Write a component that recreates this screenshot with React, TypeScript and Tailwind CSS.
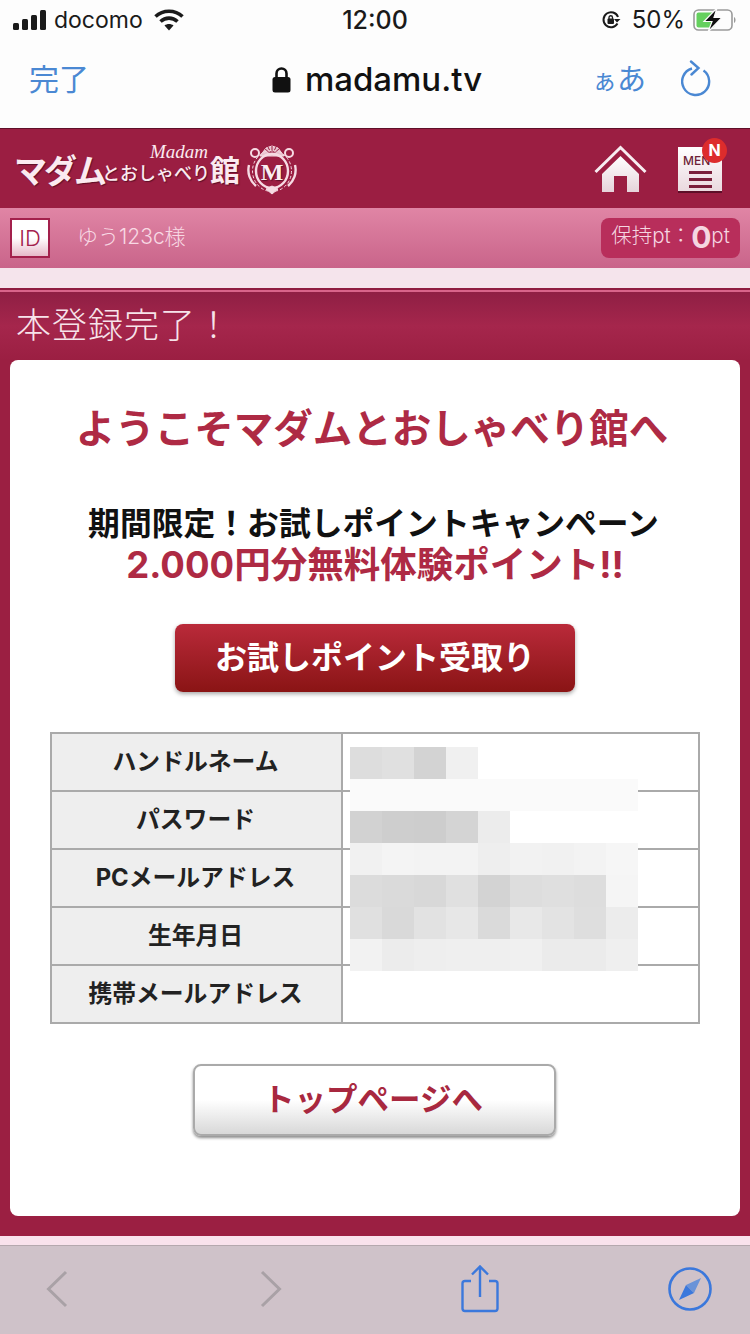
import React from 'react';

const mosaic: string[][] = [
  ['#dddddd', '#e0e0e0', '#d3d3d3', '#f0f0f0'],
  ['#fafafa', '#fafafa', '#fafafa', '#fafafa', '#fafafa', '#fafafa', '#fafafa', '#fafafa', '#fafafa'],
  ['#d2d2d2', '#cecece', '#cdcdcd', '#d4d4d4', '#ececec'],
  ['#f1f1f1', '#f4f4f4', '#f3f3f3', '#f3f3f3', '#eeeeee', '#f2f2f2', '#f1f1f1', '#f3f3f3', '#f6f6f6'],
  ['#dcdcdc', '#dadada', '#d8d8d8', '#e0e0e0', '#d3d3d3', '#dddddd', '#dfdfdf', '#dddddd', '#f5f5f5'],
  ['#e0e0e0', '#d9d9d9', '#e2e2e2', '#e7e7e7', '#dadada', '#e8e8e8', '#e3e3e3', '#dedede', '#ececec'],
  ['#f2f2f2', '#ececec', '#eeeeee', '#efefef', '#efefef', '#f0f0f0', '#ebebeb', '#ebebeb', '#efefef'],
];

const labels = ['ハンドルネーム', 'パスワード', 'PCメールアドレス', '生年月日', '携帯メールアドレス'];

const StatusBar = () => (
  <div className="h-[40px] flex items-center justify-between pl-[13px] pr-[13px] text-[#1a1a1a]">
    <div className="w-[260px] flex items-center gap-[6px]">
      <svg width="35" height="20" viewBox="0 0 35 20" fill="#1a1a1a">
        <rect x="0" y="13" width="6" height="7" rx="1.5" />
        <rect x="9" y="9" width="6" height="11" rx="1.5" />
        <rect x="18" y="5" width="6" height="15" rx="1.5" />
        <rect x="27" y="0" width="6" height="20" rx="1.5" />
      </svg>
      <span className="text-[23px] leading-none">docomo</span>
      <svg className="ml-[5px]" width="30" height="22" viewBox="0 0 30 22" fill="none" stroke="#1a1a1a" strokeWidth="3.6">
        <path d="M1.5 7.5 C9 0.5 21 0.5 28.5 7.5" />
        <path d="M6.5 12.5 C11.5 8 18.5 8 23.5 12.5" />
        <path d="M15 21.5 L10.5 16.5 C13 14.5 17 14.5 19.5 16.5 Z" fill="#1a1a1a" stroke="none" />
      </svg>
    </div>
    <span className="text-[25px] font-medium leading-none">12:00</span>
    <div className="w-[260px] flex items-center justify-end">
      <svg width="20" height="20" viewBox="0 0 20 20" fill="none" stroke="#1a1a1a">
        <path d="M16.5 13.5 A7.5 7.5 0 1 1 17 7" strokeWidth="2" />
        <path d="M19.5 9 L16 12.5 L13 9 Z" fill="#1a1a1a" stroke="none" />
        <rect x="6.5" y="8.5" width="6.5" height="5.5" rx="1" fill="#1a1a1a" stroke="none" />
        <path d="M8 9 V7.5 A1.7 1.7 0 0 1 11.5 7.5 V9" strokeWidth="1.3" />
      </svg>
      <span className="ml-[11px] text-[24px] leading-none">50%</span>
      <svg className="ml-[8px]" width="44" height="24" viewBox="0 0 44 24">
        <rect x="1" y="2" width="38" height="20" rx="4.5" fill="none" stroke="#9a9a9a" strokeWidth="1.6" />
        <rect x="3.5" y="4.5" width="18" height="15" rx="2" fill="#65d05e" />
        <path d="M41 9 C43 10 43 14 41 15 Z" fill="#9a9a9a" />
        <path d="M24 0 L11 13.5 H19 L15 24 L29 9.5 H21 Z" fill="#111111" stroke="#fdfdfd" strokeWidth="1.2" />
      </svg>
    </div>
  </div>
);

const BrowserBar = () => (
  <div className="h-[88px] pb-[10px] flex items-center justify-between pl-[29px] pr-[37px]">
    <div className="w-[220px] text-[30px] leading-none text-[#4a88d3]">完了</div>
    <div className="flex items-center gap-[14px]">
      <svg width="19" height="27" viewBox="0 0 19 27">
        <path d="M4.5 12 V7.5 A5 5 0 0 1 14.5 7.5 V12" fill="none" stroke="#111111" strokeWidth="2.6" />
        <rect x="0.5" y="11" width="18" height="15.5" rx="2.5" fill="#111111" />
      </svg>
      <span className="text-[33px] font-medium leading-none text-[#111111]">madamu.tv</span>
    </div>
    <div className="w-[208px] flex items-center justify-end gap-[35px]">
      <span className="text-[#4a88d3] leading-none whitespace-nowrap">
        <span className="text-[25px]">ぁ</span>
        <span className="text-[29px]">あ</span>
      </span>
      <svg width="32" height="38" viewBox="0 0 32 38" fill="none" stroke="#4a88d3" strokeWidth="2.4">
        <path d="M11 8.5 A13.5 13.5 0 1 0 22.5 10.5" />
        <path d="M10 1.5 L17.5 8 L10.5 14.5" strokeLinecap="round" />
      </svg>
    </div>
  </div>
);

const Crest = () => (
  <svg width="52" height="52" viewBox="0 0 52 52" fill="none" stroke="#f6dbe3">
    <path d="M14 13 L20 5 L26 3 L32 5 L38 13 Z" fill="#e9c3cf" strokeWidth="1" />
    <path d="M26 12 L18 5 M26 12 L22 4 M26 12 L26 3 M26 12 L30 4 M26 12 L34 5" stroke="#9b1e42" strokeWidth="1" />
    <circle cx="9" cy="10" r="4" strokeWidth="2" />
    <circle cx="43" cy="10" r="4" strokeWidth="2" />
    <ellipse cx="26" cy="28" rx="16" ry="17" strokeWidth="2.4" />
    <ellipse cx="26" cy="28" rx="19.5" ry="20.5" strokeWidth="1" strokeDasharray="3 2" />
    <path d="M3 22 C1 30 4 38 10 43 M49 22 C51 30 48 38 42 43" strokeWidth="2.4" />
    <path d="M20 46 L26 43 L32 46 L26 51 Z" fill="#f6dbe3" strokeWidth="1" />
    <text x="26" y="37" textAnchor="middle" fontSize="24" fill="#fbeef2" stroke="none" fontFamily="'Liberation Serif', serif">M</text>
  </svg>
);

const Logo = () => (
  <div className="relative flex items-center text-[#fbeaf0] font-bold [text-shadow:1px_1px_1px_#5d0f28]">
    <span className="text-[33px] leading-none mt-[5px] w-[88px] tracking-[-3px] whitespace-nowrap">マダム</span>
    <span className="text-[18px] leading-none font-medium mt-[10px] w-[108px] whitespace-nowrap">とおしゃべり</span>
    <span className="text-[30px] leading-none mt-[3px] w-[36px]">館</span>
    <Crest />
    <span className="absolute left-[136px] top-[-1px] text-[19px] leading-none font-normal italic font-['Liberation_Serif',serif] [text-shadow:none]">
      Madam
    </span>
  </div>
);

const Header = () => (
  <div className="h-[80px] bg-[#9b1e42] border-t border-[#5f1029] flex items-center justify-between pl-[14px] pr-[28px]">
    <Logo />
    <div className="flex items-center gap-[31px]">
      <svg width="53" height="48" viewBox="0 0 53 48">
        <defs>
          <linearGradient id="homeFill" x1="0" y1="0" x2="0" y2="1">
            <stop offset="0" stopColor="#ffffff" />
            <stop offset="1" stopColor="#e6d3da" />
          </linearGradient>
        </defs>
        <path d="M1.5 27 L26.5 2.5 L51.5 27" fill="none" stroke="#f8edf1" strokeWidth="3" />
        <path d="M8 29 L26.5 11 L45 29 V47 H33 V31 H20 V47 H8 Z" fill="url(#homeFill)" />
      </svg>
      <div className="relative w-[44px] h-[44px] bg-gradient-to-b from-white to-[#ead9df] shadow-[0_2px_0_#5d0f28] flex flex-col items-center">
        <span className="w-full pl-[5px] text-[12px] font-medium leading-none mt-[8px] text-[#6e1f38]">MEN</span>
        <div className="mt-[4px] flex flex-col gap-[4px]">
          <div className="w-[23px] h-[3px] bg-[#7a1f3b]" />
          <div className="w-[23px] h-[3px] bg-[#7a1f3b]" />
          <div className="w-[23px] h-[3px] bg-[#7a1f3b]" />
        </div>
        <div className="absolute top-[-9px] right-[-5px] w-[25px] h-[25px] rounded-full bg-[#dd2c2c] flex items-center justify-center text-white text-[16px] font-bold leading-none">
          N
        </div>
      </div>
    </div>
  </div>
);

const UserBar = () => (
  <div className="h-[60px] bg-gradient-to-b from-[#e085a5] to-[#c9648a] flex items-center justify-between pl-[10px] pr-[10px]">
    <div className="flex items-center">
      <div className="w-[40px] h-[40px] border-2 border-[#a3204c] bg-gradient-to-b from-white from-50% to-[#e6b9c9] flex items-center justify-center text-[22px] leading-none font-light text-[#a3204c]">
        ID
      </div>
      <span className="ml-[27px] pb-[3px] text-[21px] leading-none font-light text-[#f8d9e4]">ゆう123c様</span>
    </div>
    <div className="w-[139px] h-[40px] pb-[3px] rounded-[8px] bg-[#b82e5b] flex items-center justify-center text-[20.5px] leading-none font-light text-[#f5d6e1] whitespace-nowrap">
      保持pt：<span className="text-[30px] font-bold">0</span>pt
    </div>
  </div>
);

const InfoTable = () => (
  <div className="relative mt-[40px] mx-[40px] border-2 border-[#aaaaaa]">
    {labels.map((label, i) => (
      <div key={label} className={i === 0 ? 'flex h-[56px]' : 'flex h-[58px] border-t-2 border-[#aaaaaa]'}>
        <div className="w-[289px] pr-[2px] bg-[#eeeeee] flex items-center justify-center text-[23.8px] font-bold leading-none text-[#222222]">
          {label}
        </div>
        <div className="flex-1 border-l-2 border-[#aaaaaa] bg-white" />
      </div>
    ))}
    <div className="absolute left-[298px] top-[13px] flex flex-col">
      {mosaic.map((row, r) => (
        <div key={r} className="flex h-[32px]">
          {row.map((color, c) => (
            <div key={c} className="w-[32px] h-[32px]" style={{ backgroundColor: color }} />
          ))}
        </div>
      ))}
    </div>
  </div>
);

const Card = () => (
  <div className="mx-[10px] h-[856px] bg-white rounded-[8px] pt-[44px] flex flex-col">
    <div className="h-[52px] pr-[6px] flex items-center justify-center text-[39.5px] font-bold leading-none text-[#ae2a44] whitespace-nowrap">
      ようこそマダムとおしゃべり館へ
    </div>
    <div className="mt-[48px] h-[40px] pr-[3px] flex items-center justify-center text-[31.8px] font-bold leading-none text-[#111111] whitespace-nowrap">
      期間限定！お試しポイントキャンペーン
    </div>
    <div className="mt-[-1px] h-[44px] flex items-center justify-center text-[36.5px] font-bold leading-none text-[#ae2a44] whitespace-nowrap">
      2.000円分無料体験ポイント!!
    </div>
    <div className="mt-[37px] mx-auto w-[400px] h-[68px] rounded-[8px] bg-gradient-to-b from-[#ba2a3a] to-[#8a1414] shadow-[0_2px_4px_rgba(0,0,0,0.35)] flex items-center justify-center text-[32px] font-semibold leading-none text-white">
      お試しポイント受取り
    </div>
    <InfoTable />
    <div className="mt-[40px] ml-[183px] w-[363px] h-[72px] pr-[3px] rounded-[8px] border-2 border-[#aaaaaa] bg-gradient-to-b from-white from-50% to-[#d8d8d8] shadow-[0_2px_3px_rgba(0,0,0,0.45)] flex items-center justify-center text-[31.5px] font-bold leading-none text-[#a8283f]">
      トップページへ
    </div>
  </div>
);

const Toolbar = () => (
  <div className="h-[89px] bg-[#cfc2c9] border-t border-[#b5a8ae] flex items-center pl-[46px] pb-[2px]">
    <svg width="22" height="38" viewBox="0 0 22 38" fill="none" stroke="#a9a1a6" strokeWidth="3">
      <path d="M20 2 L2.5 19 L20 36" />
    </svg>
    <svg className="ml-[192px]" width="22" height="38" viewBox="0 0 22 38" fill="none" stroke="#a9a1a6" strokeWidth="3">
      <path d="M2 2 L19.5 19 L2 36" />
    </svg>
    <svg className="ml-[179px]" width="38" height="48" viewBox="0 0 38 48" fill="none" stroke="#3b78dc" strokeWidth="2.4">
      <path d="M10 16 H4 A2.5 2.5 0 0 0 1.5 18.5 V43.5 A2.5 2.5 0 0 0 4 46 H34 A2.5 2.5 0 0 0 36.5 43.5 V18.5 A2.5 2.5 0 0 0 34 16 H28" />
      <path d="M19 32 V2 M11 9.5 L19 1.5 L27 9.5" />
    </svg>
    <svg className="ml-[169px]" width="44" height="44" viewBox="0 0 44 44" fill="none">
      <circle cx="22" cy="22" r="20.5" stroke="#3b78dc" strokeWidth="2.6" />
      <path d="M33 11 L26 26 L18 18 Z" fill="#6a93d8" />
      <path d="M11 33 L18 18 L26 26 Z" fill="#3b78dc" />
    </svg>
  </div>
);

const App = () => {
  return (
    <div className="w-[750px] h-[1334px] overflow-hidden flex flex-col bg-[#9b1f42] font-['Inter','Noto_Sans_CJK_JP',sans-serif]">
      <div className="h-[128px] bg-[#fdfdfd]">
        <StatusBar />
        <BrowserBar />
      </div>
      <Header />
      <UserBar />
      <div className="h-[20px] bg-[#f5e4ec]" />
      <div className="h-[2px] bg-[#8f1c40]" />
      <div className="h-[2px] bg-[#d8648a]" />
      <div className="h-[68px] bg-gradient-to-b from-[#8f1f44] via-[#a5264c] to-[#9b1f42] flex items-center pl-[16px] pb-[2px] text-[35px] tracking-[1px] font-light leading-none text-[#f7e3ea]">
        本登録完了！
      </div>
      <Card />
      <div className="h-[20px] bg-[#9b1f42]" />
      <div className="h-[9px] bg-[#f9e2ec]" />
      <Toolbar />
    </div>
  );
};

export default App;
